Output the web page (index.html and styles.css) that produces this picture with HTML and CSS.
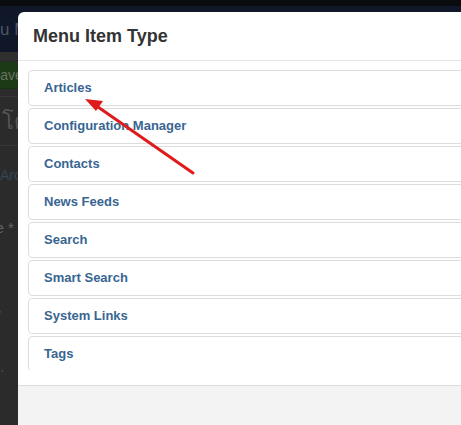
FILE: index.html
```html
<!DOCTYPE html>
<html>
<head>
<meta charset="utf-8">
<link rel="stylesheet" href="styles.css">
</head>
<body>
<div class="page">
  <div class="topbar"></div>
  <div class="titlebar"><span class="title">Menu Manager</span></div>
  <div class="toolbar"><span class="btn-save">Save</span></div>
  <div class="row row-icon"><span class="glyph">โด</span></div>
  <div class="row row-tab"><span class="tab">Archived</span></div>
  <div class="row row-label"><span>Title *</span></div>
  <div class="row row-y"><span>y</span></div>
  <div class="row row-dot"><span>.</span></div>
</div>

<div class="modal">
  <div class="modal-header"><h3>Menu Item Type</h3></div>
  <div class="modal-body">
    <div class="list">
      <div class="item">Articles</div>
      <div class="item">Configuration Manager</div>
      <div class="item">Contacts</div>
      <div class="item">News Feeds</div>
      <div class="item">Search</div>
      <div class="item">Smart Search</div>
      <div class="item">System Links</div>
      <div class="item">Tags</div>
    </div>
  </div>
  <div class="modal-footer"></div>
</div>

<svg class="arrow" width="461" height="425" viewBox="0 0 461 425">
  <line x1="193" y1="173" x2="98" y2="107" stroke="#e01b1b" stroke-width="3" stroke-linecap="round"/>
  <polygon points="85,99 103,101 96,111" fill="#e01b1b"/>
</svg>
</body>
</html>
```

FILE: styles.css
```css
html, body {
  margin: 0;
  padding: 0;
  width: 461px;
  height: 425px;
  overflow: hidden;
}
body {
  background: #2b2b2b;
  font-family: "Liberation Sans", Arial, sans-serif;
  position: relative;
}
.page {
  display: flex;
  flex-direction: column;
  height: 425px;
}
.topbar {
  height: 6px;
  background: #0a0b0d;
}
.titlebar {
  height: 46px;
  background: #0f1728;
  display: flex;
  align-items: center;
  overflow: hidden;
}
.title {
  color: #4c5465;
  font-size: 17px;
  margin-left: -33px;
  white-space: nowrap;
  position: relative;
  top: 1px;
}
.toolbar {
  height: 36px;
  border-top: 8px solid #2f2f2f;
  background: #2b2b2b;
  display: flex;
  align-items: flex-start;
  overflow: hidden;
}
.btn-save {
  display: block;
  height: 26px;
  line-height: 26px;
  background: #1c3a16;
  color: #66735f;
  font-size: 14px;
  margin-left: -9px;
  margin-top: 2px;
  width: 50px;
  padding-left: 0;
  border-bottom: 1px solid #163012;
}
.row {
  border-top: 1px solid #363636;
  overflow: hidden;
  white-space: nowrap;
  color: #5c5c5c;
}
.row-icon {
  height: 48px;
  display: flex;
  align-items: center;
}
.glyph {
  font-family: "DejaVu Sans", sans-serif;
  font-size: 22px;
  color: #555;
  margin-left: 2px;
}
.row-tab {
  height: 46px;
  display: flex;
  align-items: center;
}
.tab {
  color: #344556;
  font-size: 14px;
  margin-left: 0;
  position: relative;
  top: 6px;
}
.row-label {
  border-top: none;
  height: 70px;
  display: flex;
  align-items: center;
  font-size: 15px;
  color: #646464;
}
.row-label span { margin-left: -24px; }
.row-y {
  border-top: none;
  height: 52px;
  padding-top: 44px;
  font-size: 14px;
  color: #4a4a4a;
}
.row-y span { margin-left: -6px; }
.row-dot {
  border-top: none;
  height: 40px;
  color: #4a4a4a;
}

.modal {
  position: absolute;
  left: 18px;
  top: 12px;
  width: 640px;
  height: 413px;
  background: #fff;
  border-top-left-radius: 6px;
  display: flex;
  flex-direction: column;
  overflow: hidden;
}
.modal-header {
  height: 48px;
  border-bottom: 1px solid #e5e5e5;
  display: flex;
  align-items: center;
  padding-left: 15px;
  flex: none;
}
.modal-header h3 {
  margin: 0;
  font-size: 18px;
  font-weight: bold;
  color: #333;
}
.modal-body {
  height: 309px;
  padding: 0 0 15px 10px;
  flex: none;
  border-bottom: 1px solid #dddddd;
}
.list {
  height: 309px;
  overflow: hidden;
  padding-top: 9px;
  box-sizing: border-box;
  display: flex;
  flex-direction: column;
  gap: 2px;
}
.item {
  flex: none;
  height: 33px;
  padding-bottom: 1px;
  border: 1px solid #dddddd;
  border-radius: 4px;
  padding-left: 15px;
  display: flex;
  align-items: center;
  font-size: 13px;
  font-weight: bold;
  color: #386592;
}
.modal-footer {
  flex: 1;
  background: #f3f3f3;
}
.arrow {
  position: absolute;
  left: 0;
  top: 0;
  pointer-events: none;
}
```
